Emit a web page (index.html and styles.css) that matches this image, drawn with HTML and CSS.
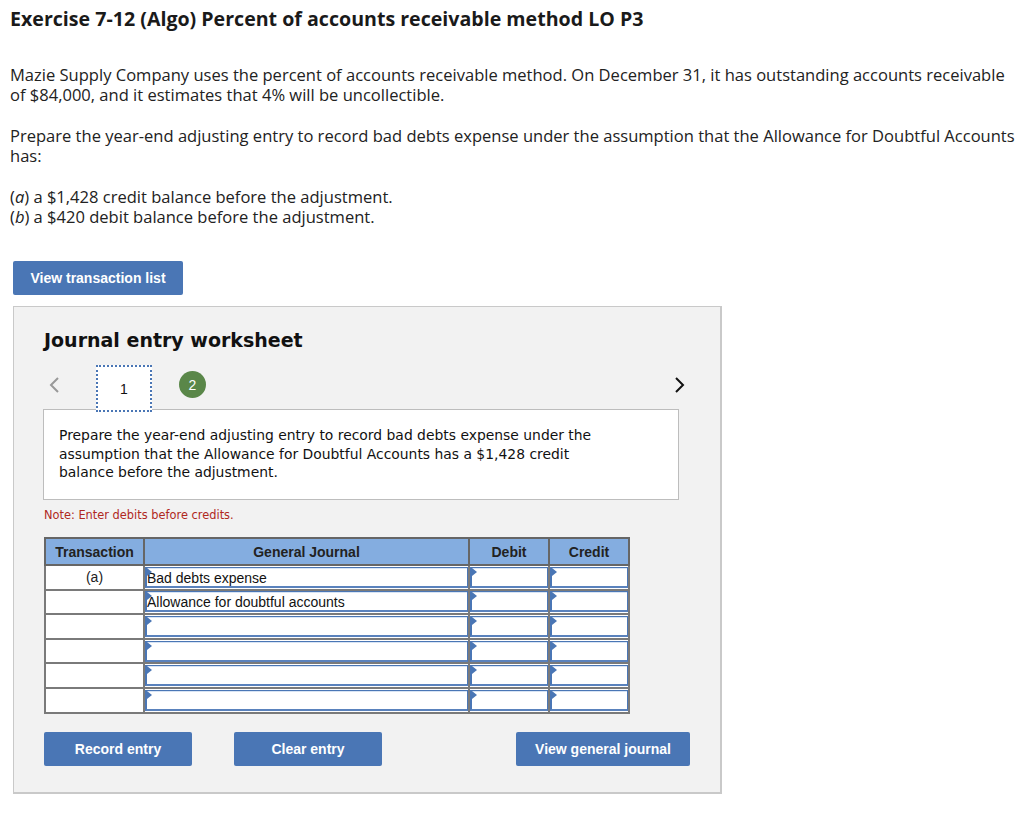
FILE: index.html
```html
<!DOCTYPE html>
<html>
<head>
<meta charset="utf-8">
<link rel="stylesheet" href="styles.css">
</head>
<body>
<h1 class="title">Exercise 7-12 (Algo) Percent of accounts receivable method LO P3</h1>
<p class="para p1">Mazie Supply Company uses the percent of accounts receivable method. On December 31, it has outstanding accounts receivable of $84,000, and it estimates that 4% will be uncollectible.</p>
<p class="para p2">Prepare the year-end adjusting entry to record bad debts expense under the assumption that the Allowance for Doubtful Accounts has:</p>
<p class="para p3">(<i>a</i>) a $1,428 credit balance before the adjustment.<br>(<i>b</i>) a $420 debit balance before the adjustment.</p>
<button class="btn btn-list">View transaction list</button>
<div class="panel">
  <h2 class="ws-title">Journal entry worksheet</h2>
  <div class="nav">
    <span class="arrow prev"><svg width="12" height="18" viewBox="0 0 12 18"><path d="M10 2 L3 9 L10 16" fill="none" stroke="#999" stroke-width="2"/></svg></span>
    <span class="tab active">1</span>
    <span class="tab-circle">2</span>
    <span class="spacer"></span>
    <span class="arrow next"><svg width="12" height="18" viewBox="0 0 12 18"><path d="M2 2 L9 9 L2 16" fill="none" stroke="#111" stroke-width="2"/></svg></span>
  </div>
  <div class="prompt">Prepare the year-end adjusting entry to record bad debts expense under the assumption that the Allowance for Doubtful Accounts has a $1,428 credit balance before the adjustment.</div>
  <p class="note">Note: Enter debits before credits.</p>
  <table class="journal">
    <thead>
      <tr><th class="c-tr">Transaction</th><th class="c-gj">General Journal</th><th class="c-amt">Debit</th><th class="c-amt">Credit</th></tr>
    </thead>
    <tbody>
      <tr><td class="tr">(a)</td><td class="in"><div class="box">Bad debts expense</div></td><td class="in"><div class="box"></div></td><td class="in"><div class="box"></div></td></tr>
      <tr><td class="tr"></td><td class="in"><div class="box">Allowance for doubtful accounts</div></td><td class="in"><div class="box"></div></td><td class="in"><div class="box"></div></td></tr>
      <tr><td class="tr"></td><td class="in"><div class="box"></div></td><td class="in"><div class="box"></div></td><td class="in"><div class="box"></div></td></tr>
      <tr><td class="tr"></td><td class="in"><div class="box"></div></td><td class="in"><div class="box"></div></td><td class="in"><div class="box"></div></td></tr>
      <tr><td class="tr"></td><td class="in"><div class="box"></div></td><td class="in"><div class="box"></div></td><td class="in"><div class="box"></div></td></tr>
      <tr><td class="tr"></td><td class="in"><div class="box"></div></td><td class="in"><div class="box"></div></td><td class="in"><div class="box"></div></td></tr>
    </tbody>
  </table>
  <div class="actions">
    <button class="btn btn-act">Record entry</button>
    <button class="btn btn-act btn-clear">Clear entry</button>
    <span class="spacer"></span>
    <button class="btn btn-act btn-view">View general journal</button>
  </div>
</div>
</body>
</html>
```

FILE: styles.css
```css
body {
  margin: 0;
  padding: 0 8px 0 10px;
  font-family: "Open Sans", Lato, sans-serif;
  color: #222;
  background: #fff;
}
.title {
  font-size: 19.6px;
  font-weight: bold;
  margin: 0;
  padding-top: 8px;
  line-height: 22px;
  color: #1a1a1a;
}
.para {
  font-size: 16.55px;
  line-height: 20px;
  margin: 0;
}
.p1 { margin-top: 35px; }
.p2 { margin-top: 21px; }
.p3 { margin-top: 21px; }
.btn {
  border: none;
  background: #4a76b5;
  color: #fff;
  font-family: "Liberation Sans", Arial, sans-serif;
  font-weight: bold;
  font-size: 14px;
  border-radius: 2px;
  cursor: pointer;
}
.btn-list {
  display: block;
  margin: 34px 0 0 3px;
  width: 170px;
  height: 34px;
}
.panel {
  margin: 11px 0 0 3px;
  width: 706px;
  height: 485px;
  box-sizing: content-box;
  background: #f2f2f2;
  border: 1px solid #c9c9c9;
  border-right-width: 2px;
  border-bottom-width: 2px;
  padding: 0;
  font-family: "DejaVu Sans", Verdana, sans-serif;
}
.ws-title {
  font-size: 19px;
  font-weight: bold;
  margin: 22px 0 0 30px;
  line-height: 22px;
  color: #111;
}
.nav {
  display: flex;
  align-items: center;
  margin: 14px 0 0 0;
  height: 46px;
  padding-left: 34px;
  padding-right: 34px;
}
.arrow { display: flex; align-items: center; }
.tab {
  margin-left: 36px;
  background: #fff;
  border: 2px dotted #4a76b5;
  display: flex;
  align-items: center;
  justify-content: center;
  font-size: 14px;
  font-family: "Liberation Sans", Arial, sans-serif;
  color: #111;
  position: relative;
  z-index: 2;
  box-sizing: border-box;
  width: 56px;
  height: 47px;
  margin-top: 1px;
}
.tab-circle {
  margin-left: 27px;
  width: 27px;
  height: 27px;
  border-radius: 50%;
  background: #5a8749;
  color: #fff;
  font-size: 14px;
  font-family: "Liberation Sans", Arial, sans-serif;
  display: flex;
  align-items: center;
  justify-content: center;
  margin-top: -7px;
}
.spacer { flex: 1; }
.next { margin-top: -7px; }
.prev { margin-top: -7px; }
.prompt {
  position: relative;
  z-index: 1;
  margin: -2px 0 0 29px;
  width: 636px;
  height: 91px;
  box-sizing: border-box;
  background: #fff;
  border: 1px solid #bdbdbd;
  padding: 16px 80px 0 15px;
  font-size: 13.9px;
  line-height: 18.5px;
  color: #111;
}
.note {
  margin: 8px 0 0 30px;
  font-size: 11.4px;
  color: #b0281e;
  line-height: 14px;
}
.journal {
  margin: 15px 0 0 30px;
  border-collapse: collapse;
  font-family: "Liberation Sans", Arial, sans-serif;
  font-size: 14px;
  border: 2px solid #777;
}
.journal th {
  background: #84ade0;
  color: #222;
  font-weight: bold;
  height: 25px;
  padding: 0;
  border: 2px solid #666;
  font-size: 14px;
}
.c-tr { width: 97px; }
.c-gj { width: 323px; }
.c-amt { width: 78px; }
.journal td {
  height: 22.6px;
  padding: 0;
  border: 2px solid #7a7a7a;
  background: #fff;
}
.journal td.tr {
  text-align: center;
  color: #222;
}
.box {
  position: relative;
  height: 21px;
  box-sizing: border-box;
  border: 1px solid #4a76b5;
  border-left: 2px solid #4a76b5;
  border-bottom: 2px solid #5a82bd;
  box-shadow: inset 0 1px 0 #d8e4f4;
  padding: 2px 0 0 0;
  line-height: 17px;
  color: #111;
  background: #fff;
}
.box::before {
  content: "";
  position: absolute;
  left: 0;
  top: 0;
  border-top: 4px solid transparent;
  border-bottom: 4px solid transparent;
  border-left: 5px solid #4a76b5;
}
.actions {
  display: flex;
  margin: 18px 0 0 30px;
  width: 646px;
}
.btn-act {
  height: 34px;
  width: 148px;
}
.btn-clear { margin-left: 42px; }
.btn-view { width: 174px; }
```
